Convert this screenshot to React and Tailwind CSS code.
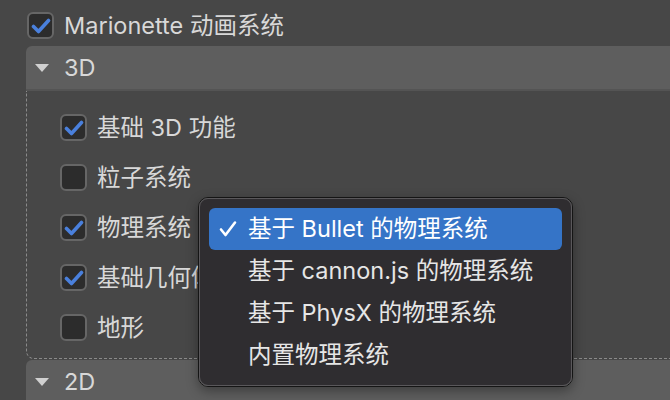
const font = { fontFamily: '"Inter", "Noto Sans CJK SC", sans-serif' };

function Checkbox({ checked }) {
  return (
    <span className="flex h-[27px] w-[27px] shrink-0 items-center justify-center rounded-[6px] border-2 border-[#666] bg-[#2c2c2c]">
      {checked && (
        <svg width="20" height="20" viewBox="0 0 20 20" fill="none">
          <path d="M2.5 10.5 L7.5 15.5 L17.5 4.5" stroke="#4a80dc" strokeWidth="3.6" strokeLinecap="round" strokeLinejoin="round" />
        </svg>
      )}
    </span>
  );
}

function Triangle() {
  return (
    <svg width="16" height="10" viewBox="0 0 16 10">
      <path d="M1 1 L15 1 L8 9 Z" fill="#d0d0d0" />
    </svg>
  );
}

const items = [
  { label: "基础 3D 功能", checked: true },
  { label: "粒子系统", checked: false },
  { label: "物理系统", checked: true },
  { label: "基础几何体", checked: true },
  { label: "地形", checked: false },
];

const menu = ["基于 Bullet 的物理系统", "基于 cannon.js 的物理系统", "基于 PhysX 的物理系统", "内置物理系统"];

export default function App() {
  return (
    <div className="relative h-[400px] w-[670px] overflow-hidden bg-[#474747] text-[23.5px] text-[#d8d8d8]" style={font}>
      <div className="flex h-[27px] items-center gap-[10px] pl-[27px] mt-[12px]">
        <Checkbox checked />
        <span className="leading-none">Marionette 动画系统</span>
      </div>

      <div className="ml-[26px] mt-[7px]">
        <div className="flex h-[45px] items-center gap-[14px] rounded-tl-[6px] border-b-2 border-[#545454] bg-[#5e5e5e] pl-[8px]">
          <Triangle />
          <span className="leading-none">3D</span>
        </div>
        <div className="h-[268px] rounded-bl-[8px] border-b border-l border-dashed border-[#8a8a8a] pl-[33px] pt-[23px]">
          {items.map((it) => (
            <div key={it.label} className="flex h-[50px] items-start gap-[10px]">
              <Checkbox checked={it.checked} />
              <span className="leading-[27px]">{it.label}</span>
            </div>
          ))}
        </div>
        <div className="mt-[1px] flex h-[44px] items-center gap-[14px] rounded-tl-[6px] bg-[#5e5e5e] pl-[8px]">
          <Triangle />
          <span className="leading-none">2D</span>
        </div>
      </div>

      <div className="absolute left-[198px] top-[197px] w-[375px] rounded-[10px] border border-[#151515] shadow-[0_4px_12px_rgba(0,0,0,0.35)]">
        <div className="rounded-[9px] border border-[#5a585b] bg-[#2f2d30] px-[9px] py-[9px]">
          {menu.map((m, i) => (
            <div
              key={m}
              className={`flex h-[42px] items-center rounded-[6px] pl-[10px] ${i === 0 ? "bg-[#3574c7] text-white" : "text-[#e6e6e6]"}`}
            >
              <span className="flex w-[29px] shrink-0">
                {i === 0 && (
                  <svg width="18" height="18" viewBox="0 0 18 18" fill="none">
                    <path d="M2 9.5 L6.5 15 L16 2.5" stroke="#ffffff" strokeWidth="2.6" strokeLinecap="round" strokeLinejoin="round" />
                  </svg>
                )}
              </span>
              <span className="leading-none">{m}</span>
            </div>
          ))}
        </div>
      </div>
    </div>
  );
}
